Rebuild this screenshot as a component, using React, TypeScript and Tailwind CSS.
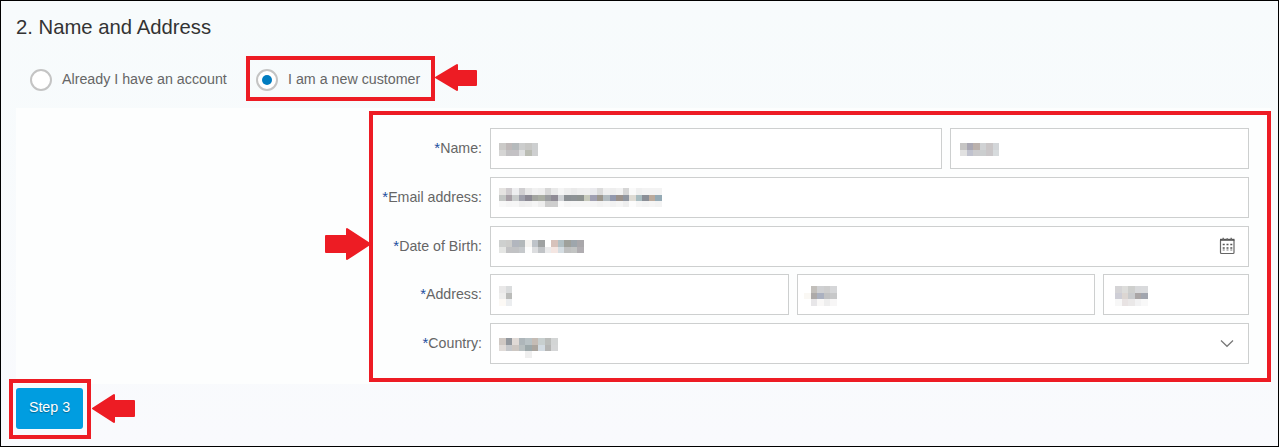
import type { ReactNode } from "react";

const CELL = 6.5;

function Mosaic({ rows, className = "" }: { rows: string[]; className?: string }) {
  const grid = rows.map((r) => r.split(" "));
  const width = Math.max(...grid.map((r) => r.length)) * CELL;
  return (
    <svg className={`block shrink-0 ${className}`} width={width} height={rows.length * CELL} shapeRendering="crispEdges" aria-hidden="true">
      {grid.map((row, y) =>
        row.map((color, x) =>
          color === "-" ? null : (
            <rect key={`${x}-${y}`} x={x * CELL} y={y * CELL} width={CELL} height={CELL} fill={`#${color}`} />
          ),
        ),
      )}
    </svg>
  );
}

function Field({ children, className = "", icon }: { children: ReactNode; className?: string; icon?: ReactNode }) {
  return (
    <div className={`flex h-[41px] justify-between border border-[#cdcfcf] bg-white pl-2 ${className}`}>
      {children}
      {icon}
    </div>
  );
}

function Row({ label, children }: { label: string; children: ReactNode }) {
  return (
    <div className="flex h-[48.75px] items-start">
      <div className="w-[113px] shrink-0 pt-[11px] text-right text-[14.2px] leading-[19px] whitespace-nowrap text-[#666666]">
        <span className="text-[15px] leading-none text-[#1f4e9e]">*</span>
        {label}:
      </div>
      <div className="ml-2 flex w-[759px] gap-2">{children}</div>
    </div>
  );
}

function Radio({ checked = false, label }: { checked?: boolean; label: string }) {
  return (
    <label className="flex items-center gap-2.5 text-[14.25px] leading-[22px] whitespace-nowrap text-[#666666]">
      <span className="flex size-[22px] shrink-0 items-center justify-center rounded-full border-2 border-[#c4c4c4] bg-white">
        {checked && <span className="size-[10px] rounded-full bg-[#007cc0]" />}
      </span>
      <span className="-mt-[2px]">{label}</span>
    </label>
  );
}

function Arrow({ points, className, width, height }: { points: string; className: string; width: number; height: number }) {
  return (
    <svg className={`absolute overflow-visible ${className}`} width={width} height={height} aria-hidden="true">
      <polygon points={points} fill="#ed1c24" stroke="#ed1c24" strokeWidth="2" strokeLinejoin="round" />
    </svg>
  );
}

function CalendarIcon() {
  return (
    <svg className="mt-[10px] mr-[12px] shrink-0" width="17" height="18" viewBox="0 0 17 18" fill="none" aria-hidden="true">
      <rect x="1.5" y="2.5" width="13.5" height="14" rx="1" stroke="#666" strokeWidth="1.2" />
      <path d="M1 2.8H15.5" stroke="#555" strokeWidth="2" />
      <path d="M4.2 0.8V3M8.2 1.2V3M12.2 0.8V3" stroke="#666" strokeWidth="1.4" />
      <path d="M3.7 7.5H13.5M3.7 11H13.5" stroke="#555" strokeWidth="1.4" strokeDasharray="2 1.8" />
      <path d="M3.7 13H13.5" stroke="#777" strokeWidth="1" strokeDasharray="2 1.8" />
    </svg>
  );
}

export default function App() {
  return (
    <div className="relative h-[447px] w-[1279px] overflow-hidden border border-black bg-linear-to-b from-[#f7fbfc] to-[#f9fafd] font-['Liberation_Sans',Arial,sans-serif]">
      <h1 className="pt-[13px] pl-[15px] text-[20.3px] leading-[26px] text-[#333333]">2. Name and Address</h1>

      <div className="mt-[29px] flex h-[22px] pl-[29px]">
        <div className="w-[226px]">
          <Radio label="Already I have an account" />
        </div>
        <Radio checked label="I am a new customer" />
      </div>

      <div className="mt-[17px] ml-[15px] h-[276px] w-[1255px] bg-[#fdfefe] pt-5 pl-[353px]">
        <Row label="Name">
          <Field className="w-[452px]">
            <Mosaic className="mt-[14px]" rows={["cbcac8 bfb9b9 b5babc cccdcd c7c7c5 cdcfd0", "d5d5d4 c2c1c3 c3c1c4 dedfe0 babcb3 cecfd0"]} />
          </Field>
          <Field className="w-[299px]">
            <Mosaic className="mt-[14px] ml-px" rows={["c6c5c4 a9a7b3 bbb1ac d0d2d4 cac6c7 d3d6d9", "e1e1e1 c0c2ce ccccce cbcecf cac7c9 d7dbdd"]} />
          </Field>
        </Row>
        <Row label="Email address">
          <Field className="w-full">
            <Mosaic
              className="mt-[10px]"
              rows={[
                "e5e3e1 d0cccf eeeef0 d0cfd1 e8e8e8 f1f1f1 eeeeee d7d7d7 e9e9e9 f5f5f5 eeeeee eaeaea eeeeee efefef ebebee dcdcdc f0f0f0 eeeeee f2f2f2 d6d6d6 fafafa f0f0f0 f3f3f3 f3f3f3 f3f3f3",
                "c3c6c4 a79fa6 c8cbcb 9fa0ab 8b8993 a3a5a0 a9ada3 9b9da0 8f8b95 cfd2d5 8b9094 8d9295 8d9290 c6c9bb a0a0b2 9c978e b2bbc0 9399ae 9b928c 9096a0 dedbd4 a9bcc0 8b8f97 bbaa9c 95aab5",
                "f8f8f8 f5f5f5 f6f6f6 eeeeee f0f0f0 f5f5f5 eeeeee cdcdcd cecece fafafa f5f5f5 f6f6f6 f6f6f6 f6f6f6 f5f5f5 f2f2f2 f5f5f5 f2f2f2 f5f5f5 eeeeee fcfcfc f5f5f5 f3f3f3 f5f5f5 f3f3f3",
              ]}
            />
          </Field>
        </Row>
        <Row label="Date of Birth">
          <Field className="w-full" icon={<CalendarIcon />}>
            <Mosaic
              className="mt-[13px]"
              rows={[
                "ced0cf cdcdcb b2b6be b3b8ba f5f3f0 bec3c9 9fa2a2 - d7c2bb b2c0c4 9fa19b 9ea6ac a9a7aa",
                "e5e6e4 c2c2c4 c1c2c4 c5c8cb fdfdfd dcdddf c0c3c6 ebebec f4e6e2 d5dde2 bfc0c0 c2c4c3 b0adb1",
              ]}
            />
          </Field>
        </Row>
        <Row label="Address">
          <Field className="w-[299px]">
            <Mosaic className="mt-[11px]" rows={["e9e8e8 dadcdd", "eeeeed bbbcba", "fcf9f5 ebedef"]} />
          </Field>
          <Field className="w-[298px]">
            <Mosaic className="mt-[11px] -ml-[2px]" rows={["- c2bfbb cfd0d2 cdcdcd d5d6d8", "faf8f4 adaaa9 abb1c0 c1c2c3 c7c8c9", "- e7e6e8 f9f8f7 eeeeee f7f6f6"]} />
          </Field>
          <Field className="w-[146px]">
            <Mosaic className="mt-[11px] ml-[3px]" rows={["d5d4d6 dddddb cecfcd d8d9db d9dadc", "ceced6 dcd6d2 c9cbcd aaa6a6 a1a5ae", "f7f7f7 e8e3e3 eae8e8 f2f2f3 f8f8f8"]} />
          </Field>
        </Row>
        <Row label="Country">
          <Field
            className="w-full"
            icon={
              <svg className="mt-[15px] mr-[14px] shrink-0" width="14" height="9" viewBox="0 0 14 9" fill="none" aria-hidden="true">
                <path d="M1 1.5L7 7.3L13 1.5" stroke="#777" strokeWidth="1.2" />
              </svg>
            }
          >
            <Mosaic
              className="mt-[14px]"
              rows={[
                "cfc8c3 93989e e0dad6 aeb6ba b9c2c5 c5bcb5 c8cfcf bbbdbb d3d5d5",
                "e0dbd8 c5c7ca cdc7c2 b8bfc0 9da8aa aba59e d3dbe2 b5b5b4 d5d6d7",
                "- - - - efefef - - - -",
              ]}
            />
          </Field>
        </Row>
      </div>

      <button className="mt-1 ml-[15px] block h-[41px] w-[67px] rounded-[3px] bg-[#009de0] pb-px text-[14.25px] text-white [text-shadow:0_1px_1px_rgba(0,0,0,0.35)]">
        Step 3
      </button>

      <div className="absolute top-[55px] left-[245px] h-[45px] w-[189px] border-4 border-[#ed1c24]" />
      <div className="absolute top-[110px] left-[368px] h-[271px] w-[902px] border-4 border-[#ed1c24]" />
      <div className="absolute top-[378px] left-[8px] h-[60px] w-[82px] border-4 border-[#ed1c24]" />
      <Arrow className="top-[63px] left-[434px]" width={42} height={27} points="1,13.5 22,1 22,7 41,7 41,21 22,21 22,26" />
      <Arrow className="top-[227px] left-[324px]" width={46} height={32} points="45,16 22,1 22,8 1,8 1,24 22,24 22,31" />
      <Arrow className="top-[393px] left-[90px]" width={44} height={29} points="2,14.5 23,1 23,7 43,7 43,22 23,22 23,28" />
    </div>
  );
}
